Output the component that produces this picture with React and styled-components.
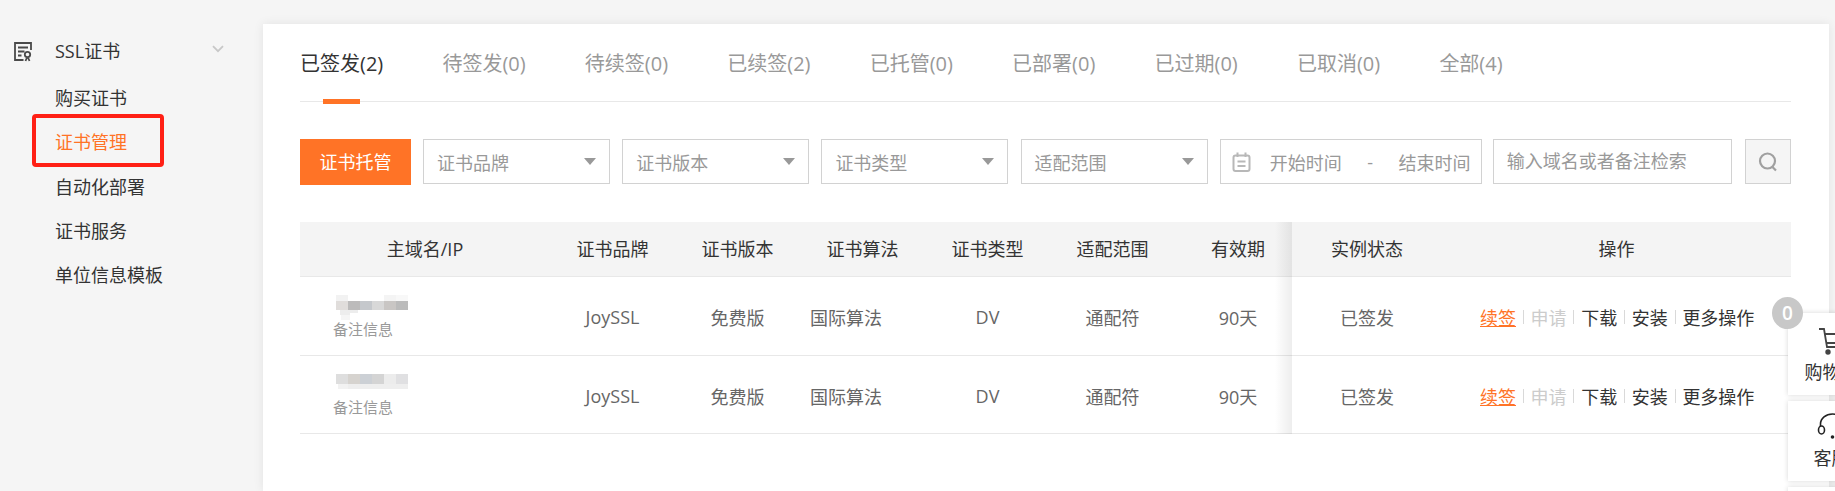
import React from "react";
import styled, { createGlobalStyle } from "styled-components";

const ORANGE = "#ff7326";

const GlobalStyle = createGlobalStyle`
  html, body { margin: 0; padding: 0; height: 100%; overflow: hidden; background: #f5f5f5; }
  body { font-family: "Open Sans", "Noto Sans CJK SC", sans-serif; color: #333; }
  * { box-sizing: border-box; }
`;

const Page = styled.div`
  position: relative;
  display: flex;
  width: 1835px;
  height: 491px;
  overflow: hidden;
`;

const Sidebar = styled.aside`
  position: relative;
  width: 263px;
  flex: none;
  padding-top: 28px;
`;

const MenuHead = styled.div`
  display: flex;
  align-items: center;
  height: 44px;
  margin-bottom: 4px;
  padding-left: 14px;
  font-size: 18px;
  color: #333;
  svg.cert { margin: 4px 23px 0 0; }
  svg.chev { margin: 0 0 3px 92px; }
`;

const MenuItem = styled.div`
  height: 44.3px;
  line-height: 44.3px;
  padding-left: 55px;
  font-size: 18px;
  color: ${(p) => (p.$active ? ORANGE : "#333")};
`;

const RedBox = styled.div`
  position: absolute;
  left: 32px;
  top: 114px;
  width: 132px;
  height: 53px;
  border: 4px solid #ff2015;
  border-radius: 4px;
`;

const Main = styled.main`
  flex: 1;
  margin: 24px 6px 0 0;
  background: #fff;
  padding: 0 38px 0 37px;
  box-shadow: 0 0 10px rgba(0, 0, 0, 0.08);
`;

const Tabs = styled.div`
  display: flex;
  gap: 59.2px;
  height: 78px;
  padding-top: 24px;
  border-bottom: 1px solid #e8e8e8;
`;

const Tab = styled.div`
  position: relative;
  height: 54px;
  line-height: 32px;
  font-size: 20px;
  color: ${(p) => (p.$active ? "#333" : "#999")};
  ${(p) =>
    p.$active &&
    `&::after {
      content: "";
      position: absolute;
      left: 23px;
      bottom: -2px;
      width: 37px;
      height: 5px;
      background: ${ORANGE};
    }`}
`;

const Toolbar = styled.div`
  display: flex;
  align-items: flex-start;
  margin-top: 37px;
  height: 46px;
`;

const HostButton = styled.div`
  width: 111px;
  height: 46px;
  line-height: 46px;
  text-align: center;
  background: ${ORANGE};
  color: #fff;
  font-size: 18px;
  margin-right: 12px;
`;

const Select = styled.div`
  display: flex;
  align-items: center;
  justify-content: space-between;
  width: 187px;
  height: 45px;
  padding: 0 13px;
  border: 1px solid #d2d2d2;
  color: #999;
  font-size: 18px;
  margin-right: 12.2px;
  &::after {
    content: "";
    border-style: solid;
    border-width: 7px 6px 0;
    border-color: #999 transparent transparent;
  }
`;

const DateRange = styled.div`
  display: flex;
  align-items: center;
  width: 262px;
  height: 45px;
  padding-left: 11px;
  border: 1px solid #d2d2d2;
  color: #999;
  font-size: 18px;
  margin-right: 11px;
  white-space: nowrap;
  svg { margin-right: 19px; }
  span.dash { margin: 0 25.500px; }
`;

const SearchInput = styled.div`
  width: 239px;
  height: 45px;
  line-height: 43px;
  padding-left: 13px;
  border: 1px solid #d2d2d2;
  color: #999;
  font-size: 18px;
  margin-right: 13px;
`;

const SearchButton = styled.div`
  display: flex;
  align-items: center;
  justify-content: center;
  width: 46px;
  height: 45px;
  border: 1px solid #d2d2d2;
  background: #f5f5f5;
`;

const Table = styled.div`
  position: relative;
  margin-top: 37px;
  width: 1491px;
`;

const cols = "250px 125px 125px 125px 125px 125px 117px 150px 349px";

const HeadRow = styled.div`
  display: grid;
  grid-template-columns: ${cols};
  height: 55px;
  padding-bottom: 2px;
  align-items: center;
  background: #f4f4f4;
  border-bottom: 1px solid #e8e8e8;
  font-size: 18px;
  color: #333;
  text-align: center;
`;

const BodyRow = styled.div`
  display: grid;
  grid-template-columns: ${cols};
  height: 78.5px;
  padding-top: 3px;
  align-items: center;
  border-bottom: 1px solid #e8e8e8;
  font-size: 18px;
  color: #666;
  text-align: center;
`;

const PeriodCell = styled.div`
  padding-left: 9px;
`;

const DomainCell = styled.div`
  padding: 0 0 3px 33px;
  text-align: left;
  line-height: 1;
  svg { display: block; }
`;

const Remark = styled.div`
  font-size: 15px;
  color: #999;
  margin-top: ${(p) => p.$gap}px;
`;

const AlgoCell = styled.div`
  text-align: left;
  padding-left: 10px;
`;

const Actions = styled.div`
  display: flex;
  align-items: center;
  justify-content: flex-start;
  padding-left: 38px;
  white-space: nowrap;
`;

const Action = styled.span`
  color: ${(p) => p.$color || "#333"};
  ${(p) => p.$underline && "text-decoration: underline;"}
`;

const Sep = styled.span`
  width: 1px;
  height: 14px;
  margin: 0 6.8px;
  background: #d9d9d9;
`;

const FixedShadow = styled.div`
  position: absolute;
  left: 975px;
  top: 0;
  bottom: 0;
  width: 17px;
  background: linear-gradient(to right, rgba(0, 0, 0, 0), rgba(0, 0, 0, 0.07));
`;

const Badge = styled.div`
  position: absolute;
  left: 1772px;
  top: 297px;
  width: 31px;
  height: 32px;
  line-height: 32px;
  border-radius: 50%;
  background: #c8c8c8;
  color: #fff;
  text-align: center;
  font-size: 19px;
  font-weight: 600;
`;

const FloatCard = styled.div`
  position: absolute;
  left: 1788px;
  top: ${(p) => p.$top}px;
  width: 87px;
  height: ${(p) => p.$height}px;
  background: #fff;
  box-shadow: 0 0 5px rgba(0, 0, 0, 0.16);
  text-align: center;
  font-size: 18px;
  line-height: 24px;
  color: #333;
  svg { display: block; margin: ${(p) => p.$iconTop}px auto 5px; }
`;

const CertIcon = () => (
  <svg className="cert" width="18" height="20" viewBox="0 0 18 20" fill="none" stroke="#4a4a4a" strokeWidth="1.8">
    <path d="M9.5 18H1V1H17V8" />
    <path d="M4 5.500h10M4 9.500h6.500M4 13.500h3.500" />
    <circle cx="13.500" cy="12.500" r="2.700" />
    <path d="M11.500 19l1.500-3.500M15.500 19l-1.500-3.500" />
  </svg>
);

const Chevron = () => (
  <svg className="chev" width="12" height="8" viewBox="0 0 12 8" fill="none" stroke="#c8c8c8" strokeWidth="1.8">
    <path d="M1 1.200l5 5 5-5" />
  </svg>
);

const CalendarIcon = () => (
  <svg width="19" height="20" viewBox="0 0 19 20" fill="none" stroke="#b8b8b8" strokeWidth="2">
    <rect x="1.500" y="3.500" width="16" height="15.500" rx="2" />
    <path d="M5.500 0.500v4.500M13.500 0.500v4.500M5.500 9.500h8M5.500 14h8" />
  </svg>
);

const SearchIcon = () => (
  <svg width="20" height="20" viewBox="0 0 20 20" fill="none" stroke="#a0a0a0" strokeWidth="2.200">
    <circle cx="9.500" cy="9" r="7.500" />
    <path d="M14.500 15l3.500 3.500" />
  </svg>
);

const CartIcon = () => (
  <svg width="28" height="28" viewBox="0 0 28 28" fill="none" stroke="#444" strokeWidth="1.800">
    <path d="M1 2h5l3 18h16" />
    <path d="M7 7h19l-2 9H8.500" />
    <circle cx="10" cy="25" r="1.800" fill="#444" />
    <circle cx="23" cy="25" r="1.800" fill="#444" />
  </svg>
);

const HeadsetIcon = () => (
  <svg width="30" height="28" viewBox="0 0 30 28" fill="none" stroke="#222" strokeWidth="1.600">
    <path d="M3.500 13V11a12 10 0 0 1 24 0v2" />
    <ellipse cx="4.500" cy="17" rx="3" ry="4" />
    <ellipse cx="26.500" cy="17" rx="3" ry="4" />
    <circle cx="15.500" cy="24" r="1.800" fill="#222" stroke="none" />
  </svg>
);

// the blurred-out domain names, one mosaic per row
const Mosaic = ({ cells, height }) => (
  <svg width="76" height={height} viewBox={`0 0 76 ${height}`}>
    {cells.map(([x, y, w, h, c], i) => (
      <rect key={i} x={x} y={y} width={w} height={h} fill={c} />
    ))}
  </svg>
);

const mosaicA = [
  [3, 0, 12, 6, "#f2f2f2"],
  [51, 0, 12, 6, "#f4f4f4"],
  [63, 0, 12, 6, "#f8f8f8"],
  [3, 6, 12, 9, "#e0dddb"],
  [15, 6, 12, 9, "#bcbbbb"],
  [27, 6, 12, 9, "#c5c8cc"],
  [39, 6, 12, 9, "#d8d8d8"],
  [51, 6, 12, 9, "#c9c6c4"],
  [63, 6, 12, 9, "#bbbbbb"],
  [7, 15, 10, 5, "#ededed"],
  [17, 15, 8, 3, "#ededed"],
  [8, 20, 9, 5, "#f5f5f5"],
];

const mosaicB = [
  [3, 0, 12, 10, "#dedede"],
  [15, 0, 12, 10, "#d6d3cf"],
  [27, 0, 12, 10, "#ccd0d5"],
  [39, 0, 12, 10, "#d4d4d4"],
  [51, 0, 12, 10, "#ececec"],
  [63, 0, 12, 10, "#e0e0e2"],
  [5, 10, 10, 5, "#f2f2f2"],
  [15, 10, 60, 5, "#eeeeee"],
];

const tabs = ["已签发(2)", "待签发(0)", "待续签(0)", "已续签(2)", "已托管(0)", "已部署(0)", "已过期(0)", "已取消(0)", "全部(4)"];
const headers = ["证书品牌", "证书版本", "证书算法", "证书类型", "适配范围"];
const rows = [
  { cells: mosaicA, height: 25, gap: 1.5 },
  { cells: mosaicB, height: 15, gap: 10.5 },
];

export default function App() {
  return (
    <Page>
      <GlobalStyle />
      <Sidebar>
        <MenuHead>
          <CertIcon />
          SSL证书
          <Chevron />
        </MenuHead>
        <MenuItem>购买证书</MenuItem>
        <MenuItem $active>证书管理</MenuItem>
        <MenuItem>自动化部署</MenuItem>
        <MenuItem>证书服务</MenuItem>
        <MenuItem>单位信息模板</MenuItem>
        <RedBox />
      </Sidebar>
      <Main>
        <Tabs>
          {tabs.map((t, i) => (
            <Tab key={t} $active={i === 0}>{t}</Tab>
          ))}
        </Tabs>
        <Toolbar>
          <HostButton>证书托管</HostButton>
          <Select>证书品牌</Select>
          <Select>证书版本</Select>
          <Select>证书类型</Select>
          <Select>适配范围</Select>
          <DateRange>
            <CalendarIcon />
            开始时间
            <span className="dash">-</span>
            结束时间
          </DateRange>
          <SearchInput>输入域名或者备注检索</SearchInput>
          <SearchButton><SearchIcon /></SearchButton>
        </Toolbar>
        <Table>
          <HeadRow>
            <div>主域名/IP</div>
            {headers.map((h) => (
              <div key={h}>{h}</div>
            ))}
            <PeriodCell>有效期</PeriodCell>
            <div>实例状态</div>
            <div>操作</div>
          </HeadRow>
          {rows.map((r, i) => (
            <BodyRow key={i}>
              <DomainCell>
                <Mosaic cells={r.cells} height={r.height} />
                <Remark $gap={r.gap}>备注信息</Remark>
              </DomainCell>
              <div>JoySSL</div>
              <div>免费版</div>
              <AlgoCell>国际算法</AlgoCell>
              <div>DV</div>
              <div>通配符</div>
              <PeriodCell>90天</PeriodCell>
              <div>已签发</div>
              <Actions>
                <Action $color={ORANGE} $underline>续签</Action>
                <Sep />
                <Action $color="#ccc">申请</Action>
                <Sep />
                <Action>下载</Action>
                <Sep />
                <Action>安装</Action>
                <Sep />
                <Action>更多操作</Action>
              </Actions>
            </BodyRow>
          ))}
          <FixedShadow />
        </Table>
      </Main>
      <FloatCard $top={313} $height={82} $iconTop={14}>
        <CartIcon />
        购物车
      </FloatCard>
      <FloatCard $top={401} $height={80} $iconTop={12}>
        <HeadsetIcon />
        客服
      </FloatCard>
      <FloatCard $top={487} $height={60} $iconTop={8} />
      <Badge>0</Badge>
    </Page>
  );
}
